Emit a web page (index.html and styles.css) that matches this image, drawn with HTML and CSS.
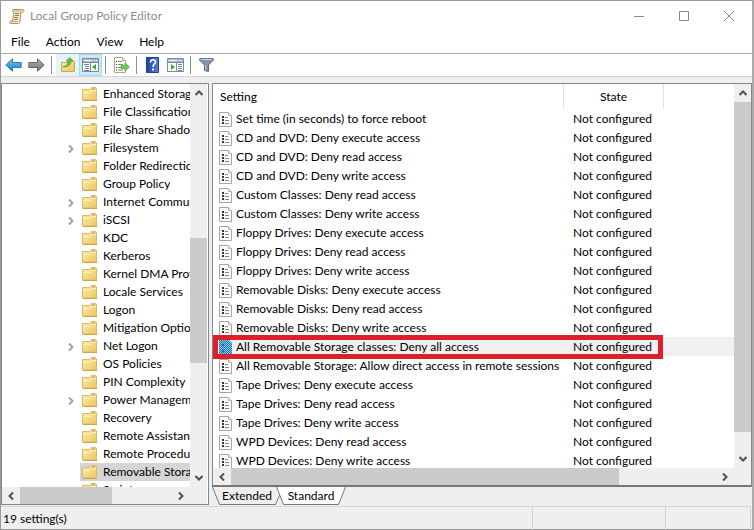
FILE: index.html
```html
<!DOCTYPE html>
<html lang="en">
<head>
<meta charset="utf-8">
<title>Local Group Policy Editor</title>
<link rel="stylesheet" href="styles.css">
</head>
<body>
<svg class="defs" aria-hidden="true">
  <defs>
    <linearGradient id="folder-fill" x1="0" y1="0" x2="1" y2="1"><stop offset="0" stop-color="#ffebaa"/><stop offset="1" stop-color="#ecc75f"/></linearGradient>
    <linearGradient id="blue-fill" x1="0" y1="0" x2="0" y2="1"><stop offset="0" stop-color="#6fcbf5"/><stop offset="1" stop-color="#1580c8"/></linearGradient>
    <linearGradient id="gray-fill" x1="0" y1="0" x2="0" y2="1"><stop offset="0" stop-color="#b5b5b5"/><stop offset="1" stop-color="#707070"/></linearGradient>
    <linearGradient id="help-fill" x1="0" y1="0" x2="1" y2="0"><stop offset="0" stop-color="#203f9c"/><stop offset="1" stop-color="#5580d8"/></linearGradient>
    <pattern id="dither" width="2" height="2" patternUnits="userSpaceOnUse"><rect width="2" height="2" fill="#8cc8e2"/><path d="M0 0h1v1H0zM1 1h1v1H1z" fill="#1678ad"/></pattern>
  </defs>
  <symbol id="folder" viewBox="0 0 15 14"><path d="M.5 2.500h7l2-2h4l1 1v11.500H.5z" fill="url(#folder-fill)" stroke="#dcb965"/><path d="M1 5.500h7l2-2h4" fill="none" stroke="#fff3c6"/><path d="M10 2h3" stroke="#b6954d"/><path d="M1 13.500h14" stroke="#c9a552"/></symbol>
  <symbol id="setting" viewBox="0 0 13 15"><path d="M.5.5h9l3 3v11H.5z" fill="#fcfcfc" stroke="#a5a5a5"/><path d="M9.500.5v3h3" fill="#eee" stroke="#b5b5b5"/><path d="M3 4h2v2H3zM3 7h2v2H3zM3 10h2v2H3z" fill="#333"/><path d="M6 5.500h3M6 8.500h4M6 11.500h4" stroke="#858585"/></symbol>
  <symbol id="setting-selected" viewBox="0 0 13 15"><path d="M0 0h10l3 3v12H0z" fill="url(#dither)"/><path d="M3 4h2v2H3zM3 10h2v2H3z" fill="#1671a2"/></symbol>
  <symbol id="chevron" viewBox="0 0 8 8"><path d="M2 .5 5.500 4 2 7.500" fill="none" stroke="currentColor" stroke-width="2"/></symbol>
  <symbol id="console" viewBox="0 0 17 14"><path d="M.5.5h16v13H.5z" fill="#fff" stroke="#7c899d"/><path d="M1 1h15v3H1z" fill="#a9b5c9"/><path d="M2 2.500h8M12 2.500h1M14 2.500h1" stroke="#fff"/><path d="M1 4.500h15" stroke="#7c899d"/></symbol>
</svg>
<div class="window">
  <header class="titlebar">
    <svg class="app-icon" width="16" height="16" viewBox="0 0 16 16"><path d="M4 1.500h9.500c2 0 2 2.500 0 2.500H12l-1 9c0 2-1 2.500-2 2.500H2c-1.500 0-2-2.500 0-2.500h1.500L5 4c-1.500 0-2-2.500-1-2.500z" fill="#f5e9c5" stroke="#a99564"/><path d="M6 5.500h4M6 7.500h4M5 9.500h4M5 11.500h4" stroke="#8b7c5c"/><path d="M2 13.500h7M5 3h7" stroke="#c3ad76"/></svg>
    <h1>Local Group Policy Editor</h1>
    <button class="caption" aria-label="Minimize"><svg width="11" height="11"><path d="M0 5.500h10" stroke="#8a8a8a"/></svg></button>
    <button class="caption" aria-label="Maximize"><svg width="11" height="11"><path d="M.5.5h9v9h-9z" fill="none" stroke="#8a8a8a"/></svg></button>
    <button class="caption" aria-label="Close"><svg width="11" height="11"><path d="m0 0 10 10M10 0 0 10" stroke="#8a8a8a"/></svg></button>
  </header>
  <nav class="menubar"><button>File</button><button>Action</button><button>View</button><button>Help</button></nav>
  <div class="toolbar">
    <button aria-label="Back"><svg width="17" height="14" viewBox="0 0 17 14"><path d="M.8 7 7.500.8V4.500h8.700v5H7.500v3.700z" fill="url(#blue-fill)" stroke="#3b7ca9"/></svg></button>
    <button aria-label="Forward"><svg width="17" height="14" viewBox="0 0 17 14"><path d="M16.200 7 9.500.8V4.500H.8v5h8.700v3.700z" fill="url(#gray-fill)" stroke="#666"/></svg></button>
    <span class="separator"></span>
    <button class="hot" aria-label="Up one level"><svg width="16" height="16" viewBox="0 0 16 16"><path d="M1.500 5.500h6l2-2h4l1 1v10h-13z" fill="url(#folder-fill)" stroke="#caa64f"/><path d="M3 10c4-1 5-3 5-6H6l4-3.500 3 4-2-.5c0 4-3 6-8 6z" fill="#5bc236" stroke="#3f9a26" stroke-width=".6"/></svg></button>
    <button class="pressed" aria-label="Show or hide console tree"><svg width="17" height="14"><use href="#console"/><path d="M8.500 5v8" stroke="#7c899d"/><path d="M2 6.500h5M3 8.500h4M3 10.500h4M2 12.500h5" stroke="#6d83a6"/><path d="M14 6v6L10 9z" fill="#43a832"/></svg></button>
    <span class="separator"></span>
    <button aria-label="Export list"><svg width="17" height="16" viewBox="0 0 17 16"><path d="M1.500.5h8l3 3v12h-11z" fill="#fffdf3" stroke="#a9a58f"/><path d="M9.500.5v3h3" fill="#eee" stroke="#aaa"/><path d="M3 4.500h1M3 7.500h1M3 10.500h1M3 13h1" stroke="#333"/><path d="M5 4.500h4M5 7.500h5M5 10.500h4M5 13h5" stroke="#8b8b8b"/><path d="M8 8.500h4V6l4.500 4-4.500 4v-2.500H8z" fill="#65d143" stroke="#46a630" stroke-width=".7"/></svg></button>
    <span class="separator"></span>
    <button aria-label="Help"><svg width="14" height="16" viewBox="0 0 14 16"><path d="M.5.5h12v15H.5z" fill="url(#help-fill)" stroke="#263f91"/><path d="M4.500 5.500c0-3.500 5-3.500 5-.5 0 2-2.500 2-2.500 5" fill="none" stroke="#fff" stroke-width="1.600"/><path d="M6 11.500h2v2H6z" fill="#fff"/></svg></button>
    <button aria-label="Show or hide action pane"><svg width="17" height="14"><use href="#console"/><path d="M9.500 5v8" stroke="#7c899d"/><path d="M11 6.500h4M11 8.500h4M11 10.500h4M11 12.500h4" stroke="#6d83a6"/><path d="M4 6v6l4-3z" fill="#43a832"/></svg></button>
    <span class="separator"></span>
    <button aria-label="Filter"><svg width="15" height="14" viewBox="0 0 15 14"><path d="M.5 1c0-1 14-1 14 0v1L9.500 7v6.500l-4-1V7L.5 2z" fill="#8294a5" stroke="#596a7a"/><path d="M2 1.500h11" stroke="#c9d6e0"/><path d="M6.500 7v5" stroke="#c5d0da"/></svg></button>
  </div>
  <main class="workspace">
    <section class="pane tree-pane" aria-label="Console tree">
      <ul class="tree">
        <li><svg class="folder"><use href="#folder"/></svg><span>Enhanced Storage Access</span></li>
        <li><svg class="folder"><use href="#folder"/></svg><span>File Classification Infrastructure</span></li>
        <li><svg class="folder"><use href="#folder"/></svg><span>File Share Shadow Copy Provider</span></li>
        <li><svg class="expander"><use href="#chevron"/></svg><svg class="folder"><use href="#folder"/></svg><span>Filesystem</span></li>
        <li><svg class="folder"><use href="#folder"/></svg><span>Folder Redirection</span></li>
        <li><svg class="folder"><use href="#folder"/></svg><span>Group Policy</span></li>
        <li><svg class="expander"><use href="#chevron"/></svg><svg class="folder"><use href="#folder"/></svg><span>Internet Communication Management</span></li>
        <li><svg class="expander"><use href="#chevron"/></svg><svg class="folder"><use href="#folder"/></svg><span>iSCSI</span></li>
        <li><svg class="folder"><use href="#folder"/></svg><span>KDC</span></li>
        <li><svg class="folder"><use href="#folder"/></svg><span>Kerberos</span></li>
        <li><svg class="folder"><use href="#folder"/></svg><span>Kernel DMA Protection</span></li>
        <li><svg class="folder"><use href="#folder"/></svg><span>Locale Services</span></li>
        <li><svg class="folder"><use href="#folder"/></svg><span>Logon</span></li>
        <li><svg class="folder"><use href="#folder"/></svg><span>Mitigation Options</span></li>
        <li><svg class="expander"><use href="#chevron"/></svg><svg class="folder"><use href="#folder"/></svg><span>Net Logon</span></li>
        <li><svg class="folder"><use href="#folder"/></svg><span>OS Policies</span></li>
        <li><svg class="folder"><use href="#folder"/></svg><span>PIN Complexity</span></li>
        <li><svg class="expander"><use href="#chevron"/></svg><svg class="folder"><use href="#folder"/></svg><span>Power Management</span></li>
        <li><svg class="folder"><use href="#folder"/></svg><span>Recovery</span></li>
        <li><svg class="folder"><use href="#folder"/></svg><span>Remote Assistance</span></li>
        <li><svg class="folder"><use href="#folder"/></svg><span>Remote Procedure Call</span></li>
        <li class="selected"><svg class="folder"><use href="#folder"/></svg><span>Removable Storage Access</span></li>
        <li><svg class="folder"><use href="#folder"/></svg><span>Scripts</span></li>
      </ul>
      <div class="scroll-y"><svg class="arrow up"><use href="#chevron"/></svg><div class="track tree-y"><i></i></div><svg class="arrow down"><use href="#chevron"/></svg></div>
      <div class="scroll-x"><svg class="arrow left"><use href="#chevron"/></svg><div class="track tree-x"><i></i></div><svg class="arrow"><use href="#chevron"/></svg></div>
    </section>
    <div class="details">
      <section class="pane list-pane" aria-label="Settings">
        <div class="list">
          <table>
            <colgroup><col class="col-setting"><col class="col-state"><col></colgroup>
            <thead><tr><th>Setting</th><th>State</th><td></td></tr></thead>
            <tbody>
              <tr><td><svg><use href="#setting"/></svg>Set time (in seconds) to force reboot</td><td>Not configured</td><td></td></tr>
              <tr><td><svg><use href="#setting"/></svg>CD and DVD: Deny execute access</td><td>Not configured</td><td></td></tr>
              <tr><td><svg><use href="#setting"/></svg>CD and DVD: Deny read access</td><td>Not configured</td><td></td></tr>
              <tr><td><svg><use href="#setting"/></svg>CD and DVD: Deny write access</td><td>Not configured</td><td></td></tr>
              <tr><td><svg><use href="#setting"/></svg>Custom Classes: Deny read access</td><td>Not configured</td><td></td></tr>
              <tr><td><svg><use href="#setting"/></svg>Custom Classes: Deny write access</td><td>Not configured</td><td></td></tr>
              <tr><td><svg><use href="#setting"/></svg>Floppy Drives: Deny execute access</td><td>Not configured</td><td></td></tr>
              <tr><td><svg><use href="#setting"/></svg>Floppy Drives: Deny read access</td><td>Not configured</td><td></td></tr>
              <tr><td><svg><use href="#setting"/></svg>Floppy Drives: Deny write access</td><td>Not configured</td><td></td></tr>
              <tr><td><svg><use href="#setting"/></svg>Removable Disks: Deny execute access</td><td>Not configured</td><td></td></tr>
              <tr><td><svg><use href="#setting"/></svg>Removable Disks: Deny read access</td><td>Not configured</td><td></td></tr>
              <tr><td><svg><use href="#setting"/></svg>Removable Disks: Deny write access</td><td>Not configured</td><td></td></tr>
              <tr class="selected"><td><svg><use href="#setting-selected"/></svg>All Removable Storage classes: Deny all access<span class="highlight"></span></td><td>Not configured</td><td></td></tr>
              <tr><td><svg><use href="#setting"/></svg>All Removable Storage: Allow direct access in remote sessions</td><td>Not configured</td><td></td></tr>
              <tr><td><svg><use href="#setting"/></svg>Tape Drives: Deny execute access</td><td>Not configured</td><td></td></tr>
              <tr><td><svg><use href="#setting"/></svg>Tape Drives: Deny read access</td><td>Not configured</td><td></td></tr>
              <tr><td><svg><use href="#setting"/></svg>Tape Drives: Deny write access</td><td>Not configured</td><td></td></tr>
              <tr><td><svg><use href="#setting"/></svg>WPD Devices: Deny read access</td><td>Not configured</td><td></td></tr>
              <tr><td><svg><use href="#setting"/></svg>WPD Devices: Deny write access</td><td>Not configured</td><td></td></tr>
            </tbody>
          </table>
        </div>
        <div class="scroll-y"><svg class="arrow up"><use href="#chevron"/></svg><div class="track list-y"><i></i></div><svg class="arrow down"><use href="#chevron"/></svg></div>
        <div class="scroll-x"><svg class="arrow left"><use href="#chevron"/></svg><div class="track list-x"><i></i></div><svg class="arrow"><use href="#chevron"/></svg></div>
      </section>
      <div class="tabs">
        <button><svg viewBox="0 0 70 18"><path d="m.5 0 7 17.500h56L69 5" fill="#efefef" stroke="#777"/></svg><span>Extended</span></button>
        <button class="active"><svg viewBox="0 0 70 18"><path d="m.5 0 7 17.500h55L69.500 0" fill="#fff" stroke="#777"/></svg><span>Standard</span></button>
      </div>
    </div>
  </main>
  <footer class="status"><span>19 setting(s)</span><span></span><span></span></footer>
</div>
</body>
</html>
```
FILE: styles.css
```css
* { box-sizing: border-box; }
body {
  margin: 0;
  font: 12px/18px Lato, "Open Sans", sans-serif;
  color: #000;
  background: #fff;
}
button {
  margin: 0;
  padding: 0;
  border: 0;
  background: none;
  font: inherit;
  color: inherit;
}
svg { display: block; flex: none; }
.defs { position: absolute; width: 0; height: 0; }

.window {
  display: flex;
  flex-direction: column;
  height: 100vh;
  border: 1px solid #999;
  border-right: 2px solid #aaa;
  background: #efefef;
}

.titlebar { display: flex; align-items: center; height: 30px; background: #fff; }
.app-icon { margin: 0 5px 0 8px; }
.titlebar h1 { flex: 1; margin: 0; font-size: 12px; font-weight: 400; color: #8c8c8c; }
.caption { display: grid; place-items: center; width: 45px; height: 30px; }

.menubar { display: flex; gap: 16px; height: 22px; padding: 0 10px; background: #fff; }

.toolbar {
  display: flex;
  align-items: center;
  height: 24px;
  border-top: 1px solid #a9a9a9;
  border-bottom: 1px solid #d5d5d5;
  padding-left: 1px;
  background: #fff;
}
.toolbar button { display: grid; place-items: center; width: 23px; height: 22px; }
.toolbar .hot { background: #e5f3fc; }
.toolbar .pressed { background: #cce8fb; border: 1px solid #a9d6f3; }
.separator { width: 1px; height: 18px; margin: 0 4px 0 3px; background: #8d8d8d; }

.workspace { display: flex; flex: 1; gap: 3px; min-height: 0; padding-top: 6px; }
.pane {
  display: grid;
  grid-template: minmax(0, 1fr) 17px / minmax(0, 1fr) 17px;
  border: 1px solid #828790;
  background: #fff;
}
.tree-pane { flex: 0 0 208px; margin-bottom: 1px; padding-right: 1px; }
.details { display: flex; flex: 1; flex-direction: column; min-width: 0; }
.list-pane { flex: 1; min-height: 0; border-bottom: 2px solid #777; }

.tree { overflow: hidden; margin: 0; padding: 1px 0 0; list-style: none; }
.tree li {
  display: flex;
  align-items: center;
  height: 18px;
  margin-left: 78px;
  padding-left: 2px;
  white-space: nowrap;
}
.tree span { min-width: 0; overflow: hidden; }
.tree .selected { background: #d5d5d5; }
.folder { width: 15px; height: 14px; margin-right: 6px; }
.expander { width: 8px; height: 8px; margin: 2px 7px 0 -15px; color: #a3a3a3; }

.scroll-y, .scroll-x { display: flex; align-items: center; background: #efefef; }
.scroll-y { flex-direction: column; }
.scroll-x { grid-column: 1 / 3; padding-right: 17px; }
.track { display: flex; flex: 1; align-self: stretch; min-width: 0; min-height: 0; }
.scroll-y .track { flex-direction: column; }
.track i { background: #cbcbcb; }
.arrow { width: 8px; height: 8px; margin: 5px; color: #505050; }
.up { transform: rotate(-90deg); }
.down { transform: rotate(90deg); }
.left { transform: rotate(180deg); }
.tree-y::before { content: ""; flex: 136; }
.tree-y i { flex: 125; }
.tree-y::after { content: ""; flex: 106; }
.tree-x i { flex: 93; }
.tree-x::after { content: ""; flex: 60; }
.list-y i { flex: 331; }
.list-y::after { content: ""; flex: 18; }
.list-x i { flex: 389; }
.list-x::after { content: ""; flex: 97; }

.list { overflow: hidden; padding-left: 1px; }
table { width: 100%; table-layout: fixed; border-collapse: separate; border-spacing: 0; }
.col-setting { width: 350px; }
.col-state { width: 100px; }
th, td { padding: 0; white-space: nowrap; }
thead tr { height: 25px; }
th { border-right: 1px solid #e2e2e2; font-weight: 400; }
th:first-child { padding-left: 6px; text-align: left; }
tbody tr { height: 19px; }
tbody td { line-height: 19px; }
tbody td:first-child { padding-left: 5px; }
tbody td:nth-child(2) { padding-left: 9px; }
tbody svg { display: inline-block; width: 13px; height: 15px; margin-right: 4px; vertical-align: -4px; }
tbody .selected { position: relative; background: #f0f0f0; }
.highlight {
  position: absolute;
  top: -2px;
  left: -1px;
  width: 450px;
  height: 24px;
  border: 5px solid #dc1f2b;
}

.tabs { display: flex; height: 19px; }
.tabs button { position: relative; width: 70px; height: 18px; }
.tabs .active { margin-left: -6px; }
.tabs svg { position: absolute; inset: 0; width: 70px; height: 18px; }
.tabs span { position: relative; }

.status {
  display: grid;
  grid-template-columns: 1fr 133px 85px;
  height: 23px;
  margin-right: 1px;
  border-top: 1px solid #d5d5d5;
  line-height: 23px;
}
.status span { padding-left: 2px; border-right: 1px solid #d2d2d2; }
```
